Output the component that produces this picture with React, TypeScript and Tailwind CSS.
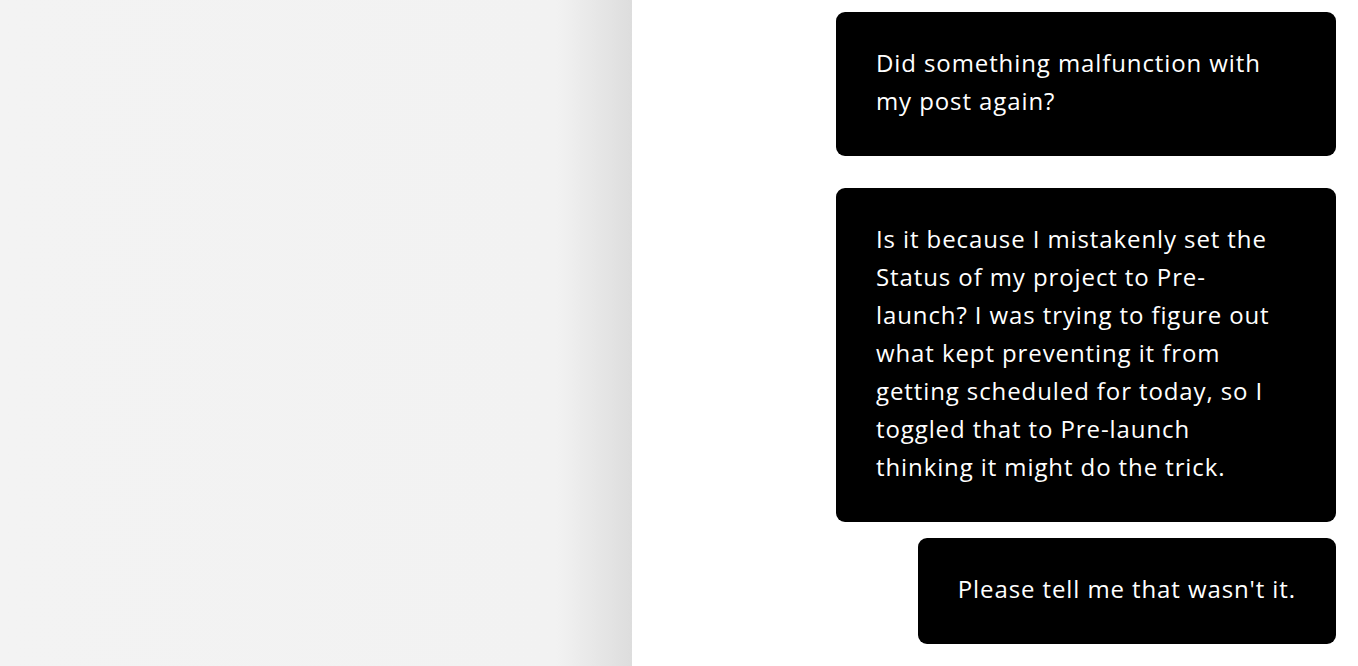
export default function App() {
  const font = { fontFamily: "'Open Sans', sans-serif" };
  return (
    <div className="flex h-[666px] w-full overflow-hidden bg-white" style={font}>
      <div className="h-full w-[632px] shrink-0 bg-[linear-gradient(to_right,#f3f3f3_0%,#f2f2f2_88%,#dddddd_100%)]" />
      <div className="flex flex-1 flex-col items-end pt-3 pr-[22px]">
        <div className="w-[500px] rounded-[9px] bg-black px-10 pt-[32px] pb-[36px] text-[24px] leading-[38px] tracking-[0.9px] text-white">
          Did something malfunction with my post again?
        </div>
        <div className="mt-8 w-[500px] rounded-[9px] bg-black pl-10 pr-[46px] pt-[32px] pb-[36px] text-[24px] leading-[38px] tracking-[0.9px] text-white">
          Is it because I mistakenly set the Status of my project to Pre-launch? I was trying to figure out what kept preventing it from getting scheduled for today, so I toggled that to Pre-launch thinking it might do the trick.
        </div>
        <div className="mt-4 rounded-[9px] bg-black px-10 pt-[32px] pb-[36px] text-[24px] leading-[38px] tracking-[0.9px] text-white">
          Please tell me that wasn't it.
        </div>
      </div>
    </div>
  );
}
